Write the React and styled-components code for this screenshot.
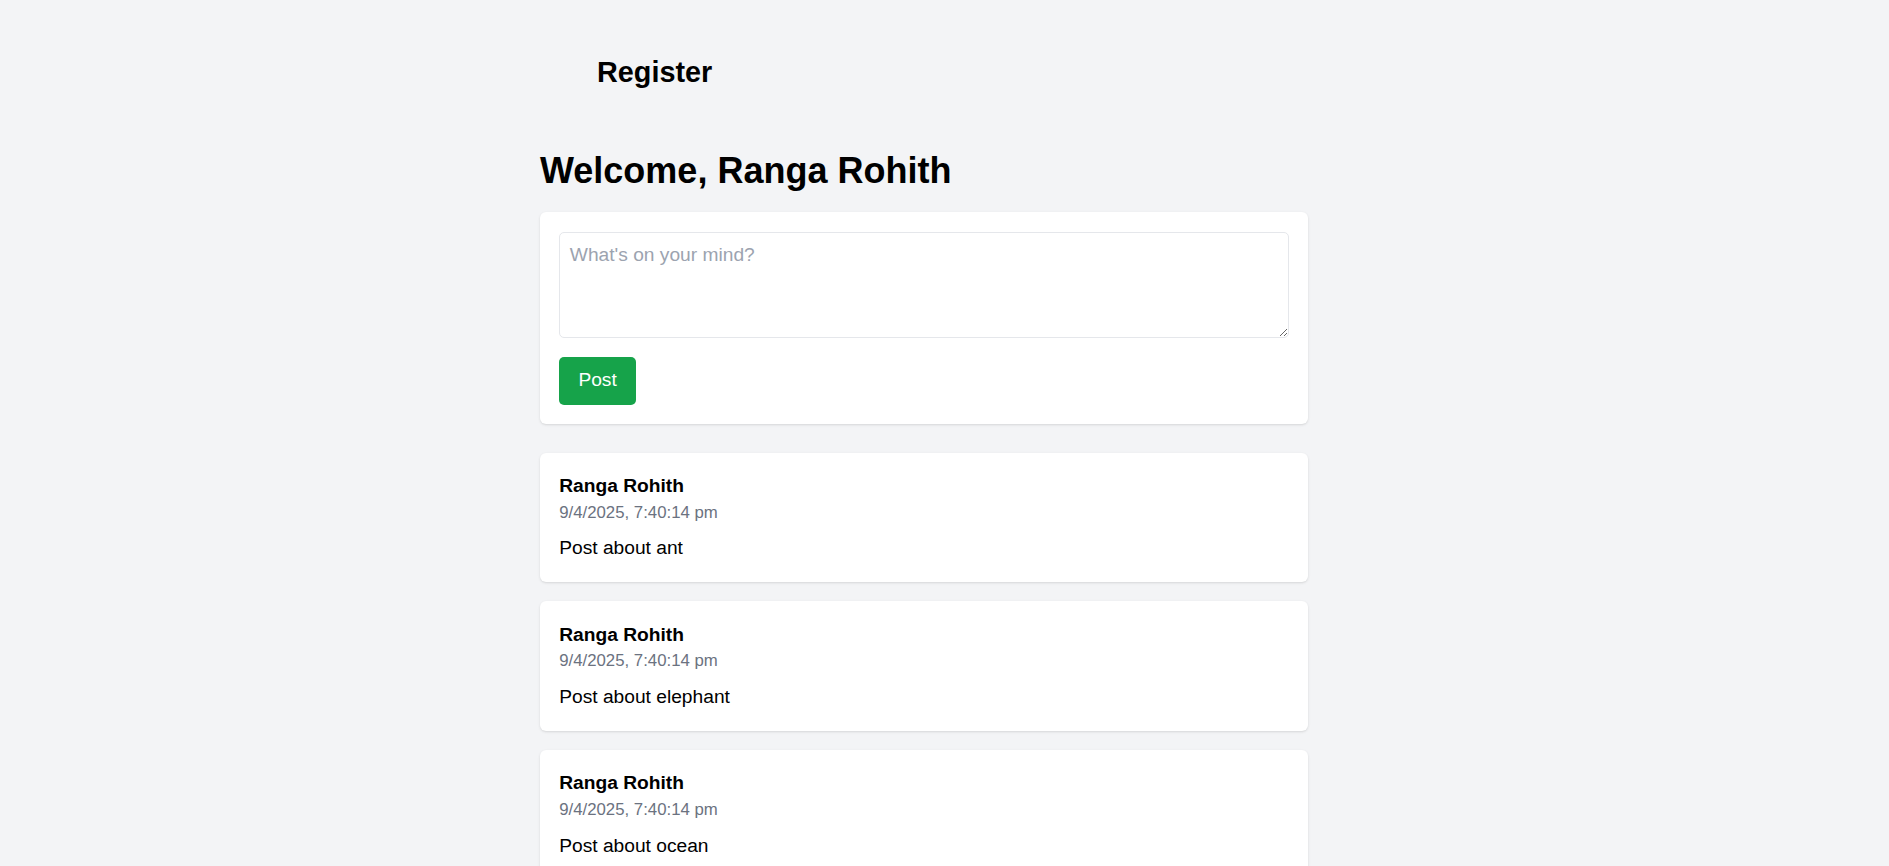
import React, { useState } from "react";
import styled, { createGlobalStyle } from "styled-components";

const GlobalStyle = createGlobalStyle`
  html, body {
    margin: 0;
    padding: 0;
    background: #f3f4f6;
    font-family: "Liberation Sans", Arial, sans-serif;
    color: #000;
  }
  * { box-sizing: border-box; }
`;

const Page = styled.div`
  min-height: 100vh;
  background: #f3f4f6;
  padding-bottom: 40px;
`;

const Shell = styled.div`
  width: 768px;
  margin-left: 540px;
`;

const Nav = styled.nav`
  display: flex;
  align-items: center;
  padding: 53px 0 0 57px;
`;

const NavTitle = styled.h2`
  margin: 0;
  font-size: 28.8px;
  line-height: 38.4px;
  font-weight: 700;
`;

const Main = styled.main`
  padding-top: 57.6px;
`;

const Heading = styled.h1`
  margin: 0 0 20.2px;
  font-size: 36px;
  line-height: 43.2px;
  font-weight: 700;
`;

const Card = styled.div`
  background: #fff;
  border-radius: 6px;
  padding: 19.2px;
  box-shadow: 0 1px 3px rgba(0, 0, 0, 0.1), 0 1px 2px -1px rgba(0, 0, 0, 0.1);
  margin-bottom: ${(p) => p.$gap || "19.2px"};
`;

const TextArea = styled.textarea`
  display: block;
  width: 100%;
  height: 106px;
  padding: 9.6px;
  border: 1px solid #e5e7eb;
  border-radius: 5px;
  font-family: inherit;
  font-size: 19.2px;
  line-height: 26px;
  color: #111827;
  background: #fff;
  outline: none;
  &::placeholder {
    color: #9ca3af;
  }
`;

const PostButton = styled.button`
  margin-top: 19.2px;
  padding: 9.6px 19.2px;
  border: none;
  border-radius: 5px;
  background: #16a34a;
  color: #fff;
  font-family: inherit;
  font-size: 19.2px;
  line-height: 28.8px;
  cursor: pointer;
  &:hover {
    background: #15803d;
  }
`;

const Feed = styled.div`
  display: flex;
  flex-direction: column;
`;

const Author = styled.div`
  font-weight: 700;
  font-size: 19.2px;
  line-height: 28.8px;
`;

const Stamp = styled.div`
  font-size: 16.8px;
  line-height: 24.6px;
  color: #6b7280;
`;

const Body = styled.p`
  margin: 9px 0 0;
  font-size: 19.2px;
  line-height: 28.8px;
`;

const posts = ["ant", "elephant", "ocean", "mountain", "river"].map((w, i) => ({
  id: i,
  author: "Ranga Rohith",
  time: "9/4/2025, 7:40:14 pm",
  text: `Post about ${w}`,
}));

export default function App() {
  const [draft, setDraft] = useState("");

  return (
    <Page>
      <GlobalStyle />
      <Shell>
        <Nav>
          <NavTitle>Register</NavTitle>
        </Nav>
        <Main>
          <Heading>Welcome, Ranga Rohith</Heading>
          <Card $gap="28.8px">
            <TextArea
              placeholder="What's on your mind?"
              value={draft}
              onChange={(e) => setDraft(e.target.value)}
            />
            <PostButton>Post</PostButton>
          </Card>
          <Feed>
            {posts.map((p) => (
              <Card key={p.id}>
                <Author>{p.author}</Author>
                <Stamp>{p.time}</Stamp>
                <Body>{p.text}</Body>
              </Card>
            ))}
          </Feed>
        </Main>
      </Shell>
    </Page>
  );
}
